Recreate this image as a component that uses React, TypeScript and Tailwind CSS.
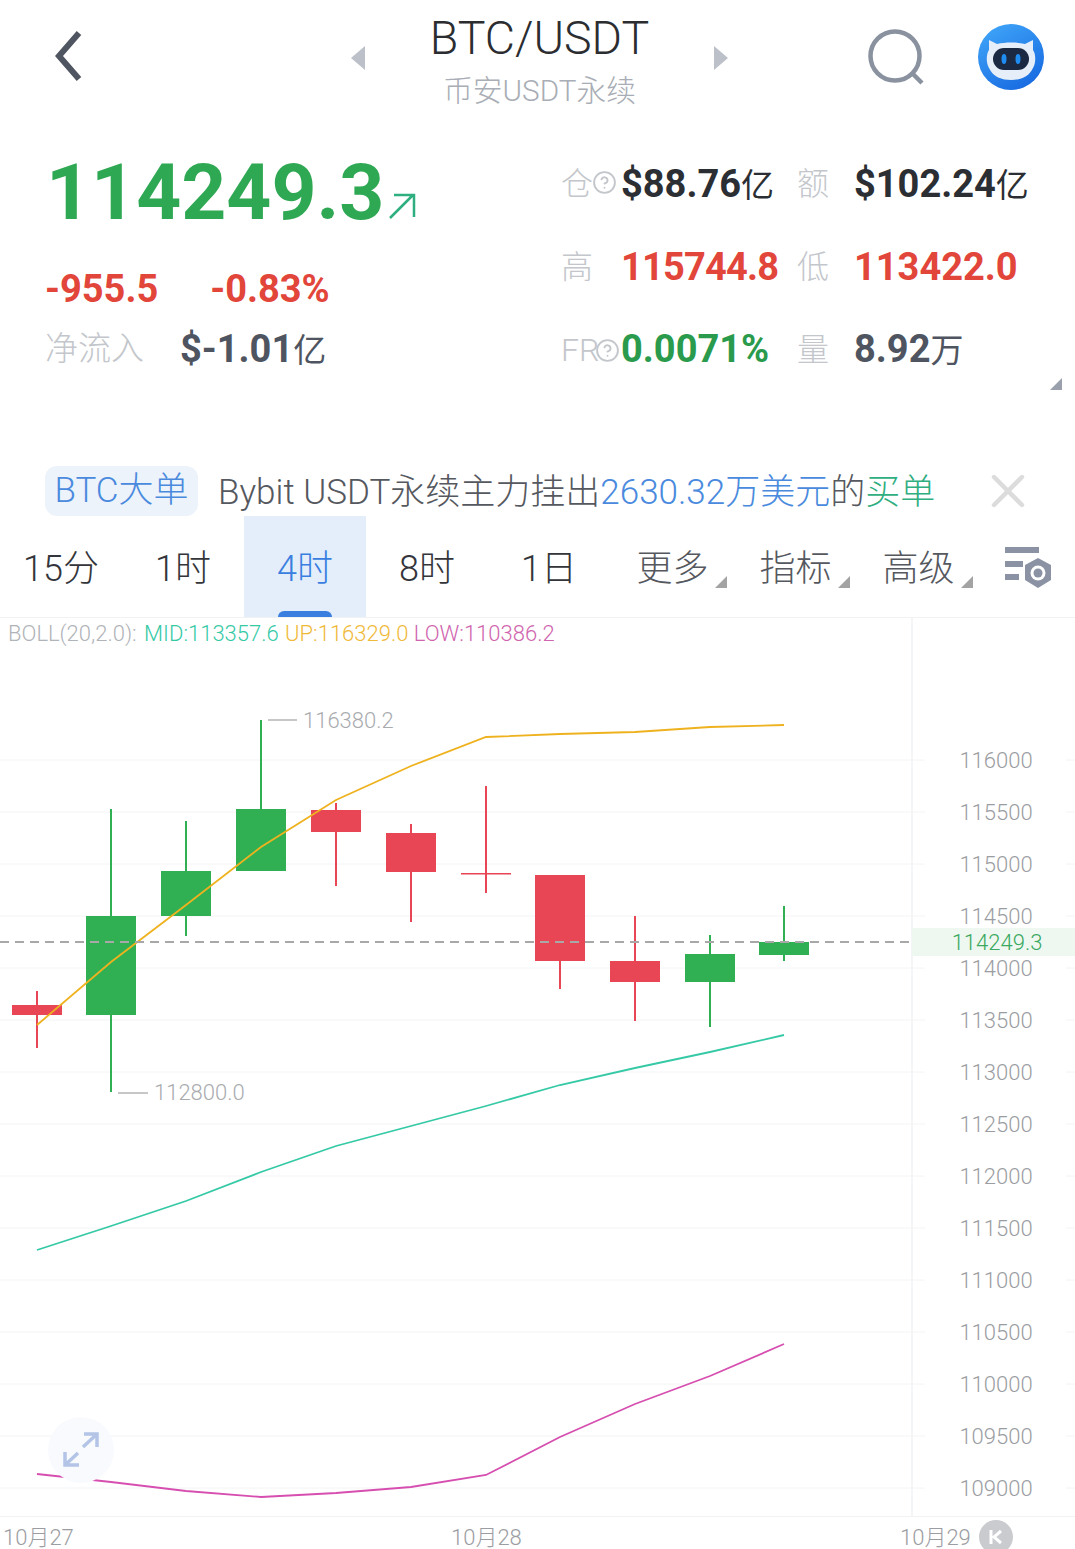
import { CircleHelp, X } from 'lucide-react';

const FONT = "font-['Roboto','Noto_Sans_CJK_SC',sans-serif]";

const TABS = ['15分', '1时', '4时', '8时', '1日'];
const MENUS = ['更多', '指标', '高级'];
const AXIS = [116000, 115500, 115000, 114500, 114000, 113500, 113000, 112500, 112000, 111500, 111000, 110500, 110000, 109500, 109000];

// x, wick top, body top, body bottom, wick bottom
const CANDLES: { x: number; hi: number; top: number; bot: number; lo: number; up: boolean }[] = [
  { x: 37, hi: 991, top: 1005, bot: 1015, lo: 1048, up: false },
  { x: 111, hi: 809, top: 916, bot: 1015, lo: 1092, up: true },
  { x: 186, hi: 821, top: 871, bot: 916, lo: 936, up: true },
  { x: 261, hi: 720, top: 809, bot: 871, lo: 871, up: true },
  { x: 336, hi: 803, top: 810, bot: 832, lo: 886, up: false },
  { x: 411, hi: 824, top: 833, bot: 872, lo: 922, up: false },
  { x: 486, hi: 786, top: 873, bot: 874.5, lo: 893, up: false },
  { x: 560, hi: 875, top: 875, bot: 961, lo: 989, up: false },
  { x: 635, hi: 916, top: 961, bot: 982, lo: 1021, up: false },
  { x: 710, hi: 935, top: 954, bot: 982, lo: 1027, up: true },
  { x: 784, hi: 906, top: 942, bot: 955, lo: 961, up: true },
];

const UP_LINE = '37,1025 111,962 186,905 261,847 336,800 411,766 486,737 560,734 635,732 710,727 784,725';
const MID_LINE = '37,1250 111,1226 186,1201 261,1172 336,1146 411,1126 486,1106 560,1085 635,1068 710,1052 784,1035';
const LOW_LINE = '37,1474 111,1482 186,1491 261,1497 336,1493 411,1487 486,1475 560,1437 635,1404 710,1376 784,1344';

function Corner({ className }: { className: string }) {
  return (
    <svg viewBox="0 0 12 12" className={className}>
      <path d="M12 0V12H0Z" fill="currentColor" />
    </svg>
  );
}

function Robot() {
  return (
    <svg viewBox="0 0 66 66" className="size-[66px]">
      <defs>
        <linearGradient id="bot" x1="0.2" y1="0" x2="0.8" y2="1">
          <stop offset="0" stopColor="#3fa4f8" />
          <stop offset="1" stopColor="#1668e0" />
        </linearGradient>
      </defs>
      <circle cx="33" cy="33" r="33" fill="url(#bot)" />
      <path d="M11 16l8 4c9-2 19-2 28 0l8-4 0 10c3 4 3 13 0 18-4 9-13 12-22 12s-18-3-22-12c-3-5-3-14 0-18z" fill="#e6eef9" />
      <rect x="15" y="24" width="36" height="22" rx="11" fill="#1c2942" />
      <ellipse cx="26" cy="35" rx="2.5" ry="5" fill="#1f8cf2" />
      <ellipse cx="40" cy="35" rx="2.5" ry="5" fill="#1f8cf2" />
    </svg>
  );
}

function SettingsIcon() {
  return (
    <svg viewBox="0 0 50 42" className="h-[42px] w-[50px]">
      <rect x="1" y="0" width="34" height="6" fill="#8a92a3" />
      <rect x="1" y="14" width="18" height="6" fill="#8a92a3" />
      <rect x="1" y="27" width="14" height="6" fill="#8a92a3" />
      <path d="M34 11l13 7v15l-13 8-13-8V18z" fill="#8a92a3" />
      <circle cx="34" cy="26" r="7.5" fill="#fff" />
      <circle cx="34" cy="26" r="4.5" fill="#8a92a3" />
    </svg>
  );
}

function Chart() {
  return (
    <svg viewBox="0 618 1075 898" className="absolute inset-0 h-full w-full">
      {AXIS.map((v, i) => (
        <g key={v} stroke="#f3f4f6" strokeWidth="1">
          <line x1="0" x2="925" y1={760 + i * 52} y2={760 + i * 52} />
          <line x1="1066" x2="1075" y1={760 + i * 52} y2={760 + i * 52} />
        </g>
      ))}
      <line x1="912" x2="912" y1="618" y2="1516" stroke="#f1f2f4" strokeWidth="1.5" />
      <polyline points={MID_LINE} fill="none" stroke="#35c9a6" strokeWidth="1.8" />
      <polyline points={LOW_LINE} fill="none" stroke="#d64fb0" strokeWidth="1.8" />
      {CANDLES.map((c) => {
        const color = c.up ? '#31b053' : '#e84555';
        return (
          <g key={c.x} fill={color} stroke="none">
            <rect x={c.x - 1} y={c.hi} width="2" height={c.lo - c.hi} />
            <rect x={c.x - 25} y={c.top} width="50" height={c.bot - c.top} />
          </g>
        );
      })}
      <polyline points={UP_LINE} fill="none" stroke="#efb21f" strokeWidth="1.8" />
      <line x1="0" x2="912" y1="942" y2="942" stroke="#a8a8a8" strokeWidth="2" strokeDasharray="9 6" />
      <line x1="268" x2="297" y1="720" y2="720" stroke="#b5b5b5" strokeWidth="1.5" />
      <line x1="118" x2="148" y1="1093" y2="1093" stroke="#b5b5b5" strokeWidth="1.5" />
    </svg>
  );
}

export default function App() {
  return (
    <div className={`${FONT} h-[1549px] w-[1075px] overflow-hidden bg-white font-light`}>
      {/* top bar */}
      <header className="flex h-[120px] items-start">
        <div className="w-[351px] pl-[51px] pt-[28px]">
          <svg viewBox="0 0 32 56" className="h-[56px] w-[32px]" fill="none" stroke="#4f5661" strokeWidth="6">
            <path d="M28 5L8 28l20 23" />
          </svg>
        </div>
        <div className="pt-[46px]">
          <svg viewBox="0 0 14 24" className="h-6 w-[14px]"><path d="M14 0V24L0 12Z" fill="#bcc1c9" /></svg>
        </div>
        <div className="w-[349px] text-center">
          <div className="mt-[8px] text-[46.5px] leading-[60px] text-[#2b2d31]">BTC/USDT</div>
          <div className="pt-[1px] text-[29.7px] leading-[44px] text-[#a9adb5]">币安USDT永续</div>
        </div>
        <div className="pt-[46px]">
          <svg viewBox="0 0 14 24" className="h-6 w-[14px]"><path d="M0 0V24L14 12Z" fill="#bcc1c9" /></svg>
        </div>
        <div className="pl-[140px] pt-[29px]">
          <svg viewBox="0 0 56 56" className="size-[56px]" fill="none" stroke="#8a92a0">
            <circle cx="27" cy="27" r="24.5" strokeWidth="4.5" />
            <path d="M45 45l9 9" strokeWidth="4.5" />
          </svg>
        </div>
        <div className="pl-[54px] pt-[24px]">
          <Robot />
        </div>
      </header>

      {/* quote stats */}
      <section className="relative flex h-[346px] pt-[22px]">
        <div className="w-[561px] pl-[45px]">
          <div className="flex h-[98px] items-center pt-[2px] text-[78.6px] font-bold leading-none text-[#2fa853]">
            <span className="pl-[1px]">114249.3</span>
            <svg viewBox="0 0 28 28" className="ml-[4px] mt-[28px] size-[28px]" fill="none" stroke="#2fae7f" strokeWidth="2.5">
              <path d="M2 26L25 3M6 3h20v22" />
            </svg>
          </div>
          <div className="mt-[19px] flex h-[60px] items-center gap-[52px] text-[38px] font-bold text-[#e2453a]">
            <span>-955.5</span>
            <span>-0.83%</span>
          </div>
          <div className="flex h-[60px] items-center">
            <span className="w-[135px] text-[33px] text-[#c3c6cb]">净流入</span>
            <span className="text-[38px] font-bold text-[#4f5560]">$-1.01<span className="text-[33px] font-normal">亿</span></span>
          </div>
        </div>

        <div className="grid grid-cols-[60px_176px_57px_auto] grid-rows-[84px_82px_83px] items-center">
          <span className="relative text-[32px] text-[#c3c6cb]">
            仓
            <CircleHelp className="absolute left-[31px] top-[10px] size-[25px] text-[#c3c6cb]" strokeWidth={1.8} />
          </span>
          <span className="text-[38px] font-bold text-[#2b2e33]">$88.76<span className="text-[33px] font-normal">亿</span></span>
          <span className="text-[32px] text-[#c3c6cb]">额</span>
          <span className="text-[38px] font-bold text-[#2b2e33]">$102.24<span className="text-[33px] font-normal">亿</span></span>

          <span className="text-[32px] text-[#c3c6cb]">高</span>
          <span className="text-[38px] font-bold tracking-[-0.8px] text-[#e2453a]">115744.8</span>
          <span className="text-[32px] text-[#c3c6cb]">低</span>
          <span className="text-[38px] font-bold text-[#e2453a]">113422.0</span>

          <span className="relative text-[32px] text-[#c3c6cb]">
            FR
            <CircleHelp className="absolute left-[34px] top-[12px] size-[25px] text-[#c3c6cb]" strokeWidth={1.8} />
          </span>
          <span className="text-[38px] font-bold text-[#2a9a4c]">0.0071%</span>
          <span className="text-[32px] text-[#c3c6cb]">量</span>
          <span className="text-[38px] font-bold text-[#4f5560]">8.92<span className="text-[33px] font-normal">万</span></span>
        </div>

        <Corner className="absolute left-[1050px] top-[258px] size-3 text-[#9aa1ad]" />
      </section>

      {/* big order notice */}
      <div className="flex h-[50px] items-center pl-[45px]">
        <span className="flex h-[50px] w-[153px] items-center justify-center rounded-[12px] bg-[#edf3fb] text-[35px] text-[#4a8ade]">BTC大单</span>
        <span className="ml-[20px] w-[762px] whitespace-nowrap pt-[5px] text-[35px] text-[#55585e]">
          Bybit USDT永续主力挂出<span className="text-[#4a8ade]">2630.32万美元</span>的<span className="text-[#2fae7f]">买单</span>
        </span>
        <X className="size-[56px] text-[#dcdcdc]" strokeWidth={1.9} />
      </div>

      {/* period tabs */}
      <nav className="flex h-[102px] border-b border-[#f1f2f4]">
        {TABS.map((t) =>
          t === '4时' ? (
            <div key={t} className="relative flex w-[122px] items-center justify-center bg-[#e4eefb] pt-[5px] text-[36px] text-[#3a7fe0]">
              {t}
              <span className="absolute bottom-0 left-[34px] h-[6px] w-[54px] rounded-t-md bg-[#3a7fe0]" />
            </div>
          ) : (
            <div key={t} className="flex w-[122px] items-center justify-center pt-[5px] text-[36px] text-[#33353a]">{t}</div>
          ),
        )}
        {MENUS.map((m) => (
          <div key={m} className="relative flex w-[123px] items-center justify-center pl-[2px] pt-[5px] text-[36px] text-[#55585e]">
            {m}
            <Corner className="absolute left-[105px] top-[60px] size-3 text-[#a3a3a3]" />
          </div>
        ))}
        <div className="pl-[25px] pt-[31px]">
          <SettingsIcon />
        </div>
      </nav>

      {/* kline canvas */}
      <div className="relative h-[899px] border-b border-[#f1f2f4]">
        <Chart />
        <div className="relative whitespace-nowrap pl-[8px] pt-[2px] text-[22px] leading-[28px] text-[#b0b3b8]">
          BOLL(20,2.0): <span className="ml-[2px] text-[#35c9a6]">MID:113357.6</span> <span className="ml-[1px] text-[#efb938]">UP:116329.0</span> <span className="text-[#d064ae]">LOW:110386.2</span>
        </div>
        <span className="absolute left-[303px] top-[88px] text-[22px] leading-[30px] text-[#a9abaf]">116380.2</span>
        <span className="absolute left-[154px] top-[460px] text-[22px] leading-[30px] text-[#a9abaf]">112800.0</span>

        <div className="absolute left-[912px] top-[310px] flex h-[28px] w-[163px] items-center justify-center bg-[#eef8f1] pl-[7px] text-[22px] text-[#3aa860]">114249.3</div>

        <div className="absolute left-[48px] top-[799px] flex size-[66px] items-center justify-center rounded-full bg-[#f8fafe]">
          <svg viewBox="0 0 38 38" className="size-[38px]" fill="none" stroke="#b3c4e6" strokeWidth="3.5">
            <path d="M21 16L35 3M22 3h13v13M16 22L3 34M3 21v13h14" />
          </svg>
        </div>

        <div className="absolute left-[912px] top-[117px] flex w-[163px] flex-col pl-[5px] text-center text-[22px] leading-[52px] text-[#9b9da2]">
          {AXIS.map((v) => (
            <span key={v} className="h-[52px]">{v}</span>
          ))}
        </div>
      </div>

      {/* time axis */}
      <footer className="relative flex h-[32px] items-center pt-[8px] text-[22px] text-[#9b9da2]">
        <span className="ml-[3px] w-[448px]">10月27</span>
        <span className="w-[449px]">10月28</span>
        <span>10月29</span>
        <span className="absolute left-[979px] top-[3px] flex size-[34px] items-center justify-center rounded-full bg-[#c9cbcf]">
          <svg viewBox="0 0 16 16" className="size-[16px]" fill="none" stroke="#fff" strokeWidth="3">
            <path d="M3 1v14M13 2L6 8l7 6" />
          </svg>
        </span>
      </footer>
    </div>
  );
}
